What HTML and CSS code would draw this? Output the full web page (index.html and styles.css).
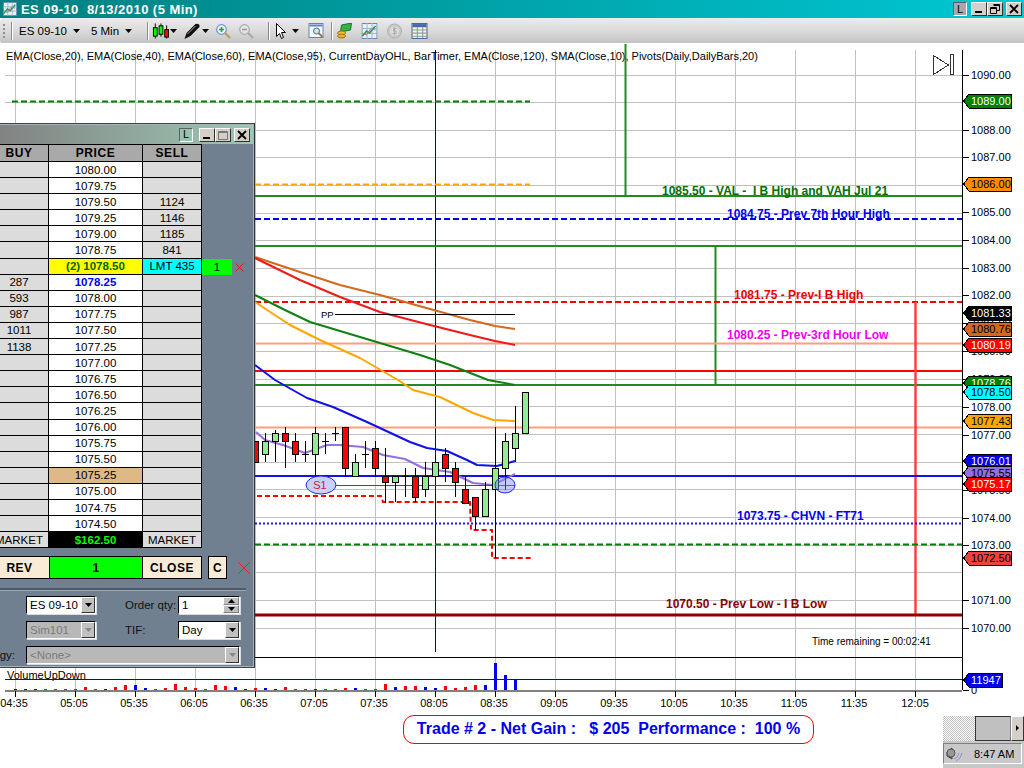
FILE: index.html
```html
<!DOCTYPE html>
<html lang="en">
<head>
    <meta charset="UTF-8">
    <title>ES 09-10 8/13/2010 (5 Min)</title>
    <link rel="stylesheet" href="styles.css">
</head>
<body>
    <svg class="defs" width="0" height="0">
        <symbol id="ico-chart" viewBox="0 0 16 16">
            <rect x="0.5" y="0.5" width="15" height="15" fill="#e8f0fa" stroke="#6688b8"/>
            <path d="M0 5.5H16M0 10.5H16M5.5 0V16M10.5 0V16" stroke="#9ab4d8"/>
            <path d="M1 13L5 8L8 10L14 3" fill="none" stroke="#20a040" stroke-width="1.6"/>
            <path d="M1 10L5 12L9 6L14 7" fill="none" stroke="#d060a0"/>
        </symbol>
        <symbol id="glyph-min" viewBox="0 0 14 12"><path d="M3 9H10" stroke="#000" stroke-width="2"/></symbol>
        <symbol id="glyph-max" viewBox="0 0 14 12"><path d="M2.5 2.5H11.5V10.5H2.5ZM2.5 3.5H11.5" fill="none" stroke="#777"/></symbol>
        <symbol id="glyph-restore" viewBox="0 0 14 12"><path d="M5.5 1.5H11.5V7.5H9M5.5 2.5H11.5M2.5 4.5H8.5V10.5H2.5ZM2.5 5.5H8.5" fill="none" stroke="#000"/></symbol>
        <symbol id="glyph-close" viewBox="0 0 14 12"><path d="M3 2L11 10M11 2L3 10" stroke="#000" stroke-width="1.8"/></symbol>
        <symbol id="glyph-down" viewBox="0 0 7 4"><path d="M0 0H7L3.5 4Z"/></symbol>
    </svg>

    <div class="titlebar">
        <svg class="title-icon"><use href="#ico-chart"/></svg>
        <span class="title-text">ES 09-10  8/13/2010 (5 Min)</span>
        <div class="win-btns">
            <button class="win-l">L</button>
            <button class="win-btn joined"><svg><use href="#glyph-min"/></svg></button>
            <button class="win-btn"><svg><use href="#glyph-restore"/></svg></button>
            <button class="win-btn gap"><svg><use href="#glyph-close"/></svg></button>
        </div>
    </div>

    <div class="toolbar">
        <span class="grip"></span>
        <span class="tool-sep"></span>
        <span class="tool-label first">ES 09-10</span><svg class="caret"><use href="#glyph-down"/></svg>
        <span class="tool-label">5 Min</span><svg class="caret"><use href="#glyph-down"/></svg>
        <span class="tool-sep"></span>
        <svg class="ico" viewBox="0 0 18 16">
            <path d="M3.5 0V16M9.5 0V14M15.5 2V16" stroke="#000"/>
            <rect x="1.5" y="4.5" width="4" height="9" fill="#0f0" stroke="#000"/>
            <rect x="7.5" y="2.5" width="4" height="9" fill="#0f0" stroke="#000"/>
            <rect x="13.5" y="6.5" width="4" height="8" fill="#f00" stroke="#000"/>
        </svg>
        <svg class="caret tight"><use href="#glyph-down"/></svg>
        <svg class="ico" viewBox="0 0 16 16">
            <path d="M0 16L2 10L11 1Q13 0 15 2L15 4L6 13Z" fill="#111"/>
            <path d="M3 11L11 3" stroke="#999"/>
        </svg>
        <svg class="caret tight"><use href="#glyph-down"/></svg>
        <svg class="ico wide" viewBox="0 0 15 15">
            <circle cx="5.5" cy="5.5" r="4.8" fill="#e8f4ff" stroke="#6a9ac8" stroke-width="1.2"/>
            <path d="M3 5.5H8M5.5 3V8" stroke="#20a040" stroke-width="1.6"/>
            <path d="M9 9L14 14" stroke="#c89a60" stroke-width="2.4"/>
        </svg>
        <svg class="ico wide" viewBox="0 0 15 15">
            <circle cx="5.5" cy="5.5" r="4.8" fill="#e4e4e4" stroke="#aaa" stroke-width="1.2"/>
            <path d="M3 5.5H8" stroke="#999" stroke-width="1.6"/>
            <path d="M9 9L14 14" stroke="#aaa" stroke-width="2.4"/>
        </svg>
        <span class="tool-sep"></span>
        <svg class="ico arrow" viewBox="0 0 10 16">
            <path d="M0.5 0.5V13.5L3.5 10.5L5.5 15.5L7.5 14.5L5.5 9.5H9.5Z" fill="#fff" stroke="#000"/>
        </svg>
        <svg class="caret"><use href="#glyph-down"/></svg>
        <svg class="ico" viewBox="0 0 16 16">
            <rect x="0.5" y="0.5" width="14" height="14" fill="#f4f8ff" stroke="#5a86c0"/>
            <path d="M1 2.5H14" stroke="#5a86c0" stroke-width="2"/>
            <circle cx="8" cy="8" r="3" fill="#cfe4f8" stroke="#567"/>
            <path d="M10 10L14 14" stroke="#a87830" stroke-width="2"/>
        </svg>
        <span class="tool-sep"></span>
        <svg class="ico" viewBox="0 0 16 16">
            <path d="M5 2L15 0L14 7L4 9Z" fill="#38b048" stroke="#1a7030"/>
            <ellipse cx="5" cy="10" rx="4" ry="2" fill="#f0c040" stroke="#a07010"/>
            <ellipse cx="5" cy="13" rx="4" ry="2" fill="#e8b030" stroke="#a07010"/>
        </svg>
        <svg class="ico" viewBox="0 0 16 16"><use href="#ico-chart"/></svg>
        <svg class="ico" viewBox="0 0 16 16">
            <circle cx="8" cy="8" r="7" fill="#c8c8c8" stroke="#b0b0b0"/>
            <circle cx="8" cy="8" r="4.5" fill="#dcdcdc"/>
            <path d="M10 5.5H7V8H9.5V10.5H6M8 4V12" fill="none" stroke="#aaa"/>
        </svg>
        <svg class="ico" viewBox="0 0 15 15">
            <rect x="0.5" y="0.5" width="14" height="14" fill="#fdf6d8" stroke="#456a9a"/>
            <path d="M1 2.5H14" stroke="#3f6cb0" stroke-width="3"/>
            <path d="M1 6.5H14M1 9.5H14M1 12.5H14M5.5 4V14M10.5 4V14" stroke="#8a9ab0"/>
        </svg>
    </div>

    <div class="chart">
        <svg class="plot" viewBox="0 44 1024 670" width="1024" height="670">
            <!-- grid -->
            <path class="grid" d="M15.5 50V690M75.5 50V690M135.5 50V690M195.5 50V690M255.5 50V690M315.5 50V690M375.5 50V690M495.5 50V690M555.5 50V690M615.5 50V690M675.5 50V690M735.5 50V690M795.5 50V690M855.5 50V690M915.5 50V690"/>
            <path class="grid" d="M5 75.5H962M5 102.5H962M5 130.5H962M5 157.5H962M5 185.5H962M5 213.5H962M5 240.5H962M5 268.5H962M5 296.5H962M5 323.5H962M5 351.5H962M5 379.5H962M5 406.5H962M5 434.5H962M5 462.5H962M5 489.5H962M5 517.5H962M5 545.5H962M5 572.5H962M5 600.5H962M5 628.5H962"/>
            <path class="now" d="M435.5 50V652"/>

            <text class="legend" x="6" y="60">EMA(Close,20), EMA(Close,40), EMA(Close,60), EMA(Close,95), CurrentDayOHL, BarTimer, EMA(Close,120), SMA(Close,10), Pivots(Daily,DailyBars,20)</text>

            <!-- key levels -->
            <path class="dash-green" d="M12 101.5H530"/>
            <path class="dash-orange" d="M255 184.5H530"/>
            <path class="solid-green" d="M625.5 44V196M255 196H962M255 246H962M715.5 246V385M255 385H962"/>
            <path class="dash-blue" d="M255 219H962"/>
            <path class="dash-red" d="M255 302H962"/>
            <path class="soft-orange" d="M255 343.5H962M255 427.5H962"/>
            <path class="solid-red" d="M255 371H962"/>
            <path class="soft-red" d="M915.5 302V615"/>
            <path class="solid-blue" d="M255 476H962"/>
            <path class="dot-blue" d="M255 523.5H962"/>
            <path class="dash-green" d="M255 544.5H962"/>
            <path class="dark-red" d="M255 615H962"/>

            <text class="lvl t-green" x="662" y="195">1085.50 - VAL -  I B High and VAH Jul 21</text>
            <text class="lvl t-blue" x="727" y="218">1084.75 - Prev 7th Hour High</text>
            <text class="lvl t-red" x="734" y="299">1081.75 - Prev-I B High</text>
            <text class="lvl t-magenta" x="727" y="339">1080.25 - Prev-3rd Hour Low</text>
            <text class="lvl t-blue" x="737" y="520">1073.75 - CHVN - FT71</text>
            <text class="lvl t-darkred" x="666" y="608">1070.50 - Prev Low - I B Low</text>
            <text class="small" x="812" y="645">Time remaining = 00:02:41</text>

            <!-- moving averages -->
            <polyline class="ma ma-brown" points="255,257 300,272 340,285 380,295 430,309 470,320 495,326 515,329"/>
            <polyline class="ma ma-red" points="255,258 300,280 340,297 380,312 430,325 470,335 495,341 515,345"/>
            <polyline class="ma ma-green" points="255,295 285,310 310,322 360,337 420,355 450,365 488,380 515,385"/>
            <polyline class="ma ma-orange" points="255,302 290,325 320,340 360,358 398,380 413,390 440,397 473,413 493,420 515,421"/>
            <polyline class="ma ma-blue" points="255,365 275,380 307,398 333,407 367,422 410,442 427,448 447,451 467,460 477,465 497,466 515,461"/>
            <polyline class="ma ma-purple" points="256,432 265,440 283,445 305,453 327,445 340,445 363,447 383,455 405,459 423,468 450,472 473,483 493,485 515,474"/>

            <!-- pivots -->
            <path class="pp" d="M335 314.5H515"/>
            <text class="tiny" x="321" y="318">PP</text>
            <path class="pivot-line" d="M336 485.5H515"/>
            <polyline class="stop" points="257,496 381,496 383,502 470,502 471,530 492,530 492,558 531,558"/>
            <ellipse class="pivot" cx="321" cy="485" rx="15" ry="9"/>
            <text class="pivot-text" x="320" y="489" text-anchor="middle">S1</text>

            <!-- candles -->
            <path class="wick" d="M265.5 433V462M275.5 430V462M285.5 427V468M295.5 433V462M305.5 441V462M315.5 427V477M325.5 433V454M335.5 427V441M345.5 427V477M355.5 454V477M365.5 441V468M375.5 441V477M385.5 448V503M395.5 476V502M405.5 468V497M415.5 468V502M425.5 462V497M435.5 455V477M445.5 448V482M455.5 462V497M465.5 476V503M475.5 497V530M485.5 482V517M495.5 427V558M505.5 433V490M515.5 406V462"/>
            <path class="wick" d="M302 454.5H309M322 441.5H329M332 433.5H339M362 454.5H369M402 476.5H409"/>
            <g class="candle up">
                <rect x="262.5" y="441.5" width="6" height="13"/>
                <rect x="272.5" y="433.5" width="6" height="8"/>
                <rect x="312.5" y="433.5" width="6" height="21"/>
                <rect x="352.5" y="462.5" width="6" height="14"/>
                <rect x="392.5" y="476.5" width="6" height="6"/>
                <rect x="422.5" y="476.5" width="6" height="13"/>
                <rect x="432.5" y="462.5" width="6" height="14"/>
                <rect x="482.5" y="489.5" width="6" height="27"/>
                <rect x="492.5" y="468.5" width="6" height="21"/>
                <rect x="502.5" y="441.5" width="6" height="27"/>
                <rect x="512.5" y="433.5" width="6" height="15"/>
                <rect x="522.5" y="392.5" width="6" height="41"/>
            </g>
            <g class="candle down">
                <rect x="252.5" y="441.5" width="6" height="21"/>
                <rect x="282.5" y="433.5" width="6" height="8"/>
                <rect x="292.5" y="441.5" width="6" height="13"/>
                <rect x="342.5" y="427.5" width="6" height="41"/>
                <rect x="372.5" y="448.5" width="6" height="20"/>
                <rect x="382.5" y="476.5" width="6" height="6"/>
                <rect x="412.5" y="476.5" width="6" height="21"/>
                <rect x="442.5" y="454.5" width="6" height="14"/>
                <rect x="452.5" y="468.5" width="6" height="14"/>
                <rect x="462.5" y="489.5" width="6" height="14"/>
                <rect x="472.5" y="497.5" width="6" height="19"/>
            </g>
            <ellipse class="pivot over" cx="505" cy="485" rx="10" ry="8"/>

            <!-- price scale -->
            <path class="axis" d="M962.5 50V690"/>
            <path class="axis" d="M963 75.5H969M963 130.5H969M963 157.5H969M963 212.5H969M963 240.5H969M963 268.5H969M963 295.5H969M963 323.5H969M963 351.5H969M963 379.5H969M963 407.5H969M963 435.5H969M963 490.5H969M963 518.5H969M963 545.5H969M963 600.5H969M963 628.5H969M963 690.5H969"/>
            <g class="ticks">
                <text x="971" y="79">1090.00</text>
                <text x="971" y="134">1088.00</text>
                <text x="971" y="161">1087.00</text>
                <text x="971" y="216">1085.00</text>
                <text x="971" y="244">1084.00</text>
                <text x="971" y="272">1083.00</text>
                <text x="971" y="299">1082.00</text>
                <text x="971" y="327">1081.00</text>
                <text x="971" y="355">1080.00</text>
                <text x="971" y="383">1079.00</text>
                <text x="971" y="411">1078.00</text>
                <text x="971" y="439">1077.00</text>
                <text x="971" y="494">1075.00</text>
                <text x="971" y="522">1074.00</text>
                <text x="971" y="549">1073.00</text>
                <text x="971" y="604">1071.00</text>
                <text x="971" y="632">1070.00</text>
                <text x="971" y="694">0</text>
            </g>

            <g class="tag tag-green" transform="translate(0 101)"><path d="M963.5 0L969 -7H1011.5V7H969Z"/><text x="971" y="4">1089.00</text></g>
            <g class="tag tag-dorange" transform="translate(0 184)"><path d="M963.5 0L969 -7H1011.5V7H969Z"/><text x="971" y="4">1086.00</text></g>
            <g class="tag tag-black" transform="translate(0 313)"><path d="M963.5 0L969 -7H1011.5V7H969Z"/><text x="971" y="4">1081.33</text></g>
            <g class="tag tag-brown" transform="translate(0 329)"><path d="M963.5 0L969 -7H1011.5V7H969Z"/><text x="971" y="4">1080.76</text></g>
            <g class="tag tag-red" transform="translate(0 345)"><path d="M963.5 0L969 -7H1011.5V7H969Z"/><text x="971" y="4">1080.19</text></g>
            <g class="tag tag-green" transform="translate(0 383)"><path d="M963.5 0L969 -7H1011.5V7H969Z"/><text x="971" y="4">1078.76</text></g>
            <g class="tag tag-cyan" transform="translate(0 392)"><path d="M963.5 0L969 -7H1011.5V7H969Z"/><text x="971" y="4">1078.50</text></g>
            <g class="tag tag-orange" transform="translate(0 421)"><path d="M963.5 0L969 -7H1011.5V7H969Z"/><text x="971" y="4">1077.43</text></g>
            <g class="tag tag-blue" transform="translate(0 461)"><path d="M963.5 0L969 -7H1011.5V7H969Z"/><text x="971" y="4">1076.01</text></g>
            <g class="tag tag-purple" transform="translate(0 473)"><path d="M963.5 0L969 -7H1011.5V7H969Z"/><text x="971" y="4">1075.55</text></g>
            <g class="tag tag-red" transform="translate(0 484)"><path d="M963.5 0L969 -7H1011.5V7H969Z"/><text x="971" y="4">1075.17</text></g>
            <g class="tag tag-flat" transform="translate(0 558)"><path d="M963.5 0L969 -7H1011.5V7H969Z"/><text x="971" y="4">1072.50</text></g>

            <!-- volume panel -->
            <path class="axis" d="M255 657.5H962"/>
            <text class="legend" x="7" y="679">VolumeUpDown</text>
            <path class="vol-line" d="M5 679.5H962"/>
            <path class="vol red" d="M45.5 690v-1M55.5 690v-1M65.5 690v-1M75.5 690v-1M85.5 690v-3M95.5 690v-1M115.5 690v-3M125.5 690v-5M155.5 690v-1M165.5 690v-2M175.5 690v-6M185.5 690v-3M195.5 690v-2M205.5 690v-1M215.5 690v-5M225.5 690v-4M255.5 690v-2M285.5 690v-3M295.5 690v-1M305.5 690v-1M325.5 690v-1M335.5 690v-1M345.5 690v-2M365.5 690v-1M375.5 690v-1M385.5 690v-6M405.5 690v-4M415.5 690v-4M445.5 690v-4M455.5 690v-2M465.5 690v-3M475.5 690v-5"/>
            <path class="vol blue" d="M15.5 690v-1M25.5 690v-1M35.5 690v-1M105.5 690v-1M135.5 690v-5M145.5 690v-2M235.5 690v-3M245.5 690v-1M265.5 690v-2M275.5 690v-1M315.5 690v-1M355.5 690v-2M395.5 690v-3M425.5 690v-3M435.5 690v-2M485.5 690v-5M495.5 690v-27M505.5 690v-15M515.5 690v-10"/>
            <g class="tag tag-blue" transform="translate(0 680)"><path d="M963.5 0L969 -7H1002.5V7H969Z"/><text x="971" y="4">11947</text></g>

            <!-- time scale -->
            <path class="base" d="M5 690.5H962"/>
            <path class="axis" d="M15.5 691V697M75.5 691V697M135.5 691V697M195.5 691V697M255.5 691V697M315.5 691V697M375.5 691V697M435.5 691V697M495.5 691V697M555.5 691V697M615.5 691V697M675.5 691V697M735.5 691V697M795.5 691V697M855.5 691V697M915.5 691V697"/>
            <g class="times">
                <text x="14" y="707">04:35</text>
                <text x="74" y="707">05:05</text>
                <text x="134" y="707">05:35</text>
                <text x="194" y="707">06:05</text>
                <text x="254" y="707">06:35</text>
                <text x="314" y="707">07:05</text>
                <text x="374" y="707">07:35</text>
                <text x="434" y="707">08:05</text>
                <text x="494" y="707">08:35</text>
                <text x="554" y="707">09:05</text>
                <text x="614" y="707">09:35</text>
                <text x="674" y="707">10:05</text>
                <text x="734" y="707">10:35</text>
                <text x="794" y="707">11:05</text>
                <text x="854" y="707">11:35</text>
                <text x="915" y="707">12:05</text>
            </g>

            <path class="play" d="M933.5 55.5V74.5L948.5 65ZM950.5 54.5H953.5V74.5H950.5Z"/>
        </svg>

        <div class="order-window">
            <div class="order-title">
                <button class="win-l">L</button>
                <button class="win-btn joined"><svg><use href="#glyph-min"/></svg></button>
                <button class="win-btn"><svg><use href="#glyph-max"/></svg></button>
                <button class="win-btn gap"><svg><use href="#glyph-close"/></svg></button>
            </div>

            <div class="ladder-row">
                <div class="ladder">
                    <div class="cell head">BUY</div><div class="cell head">PRICE</div><div class="cell head">SELL</div>
                    <div class="cell side"></div><div class="cell price">1080.00</div><div class="cell side"></div>
                    <div class="cell side"></div><div class="cell price">1079.75</div><div class="cell side"></div>
                    <div class="cell side"></div><div class="cell price">1079.50</div><div class="cell side">1124</div>
                    <div class="cell side"></div><div class="cell price">1079.25</div><div class="cell side">1146</div>
                    <div class="cell side"></div><div class="cell price">1079.00</div><div class="cell side">1185</div>
                    <div class="cell side"></div><div class="cell price">1078.75</div><div class="cell side">841</div>
                    <div class="cell side"></div><div class="cell price entry">(2) 1078.50</div><div class="cell side limit">LMT 435</div>
                    <div class="cell side">287</div><div class="cell price last">1078.25</div><div class="cell side"></div>
                    <div class="cell side">593</div><div class="cell price">1078.00</div><div class="cell side"></div>
                    <div class="cell side">987</div><div class="cell price">1077.75</div><div class="cell side"></div>
                    <div class="cell side">1011</div><div class="cell price">1077.50</div><div class="cell side"></div>
                    <div class="cell side">1138</div><div class="cell price">1077.25</div><div class="cell side"></div>
                    <div class="cell side"></div><div class="cell price">1077.00</div><div class="cell side"></div>
                    <div class="cell side"></div><div class="cell price">1076.75</div><div class="cell side"></div>
                    <div class="cell side"></div><div class="cell price">1076.50</div><div class="cell side"></div>
                    <div class="cell side"></div><div class="cell price">1076.25</div><div class="cell side"></div>
                    <div class="cell side"></div><div class="cell price">1076.00</div><div class="cell side"></div>
                    <div class="cell side"></div><div class="cell price">1075.75</div><div class="cell side"></div>
                    <div class="cell side"></div><div class="cell price">1075.50</div><div class="cell side"></div>
                    <div class="cell side"></div><div class="cell price open">1075.25</div><div class="cell side"></div>
                    <div class="cell side"></div><div class="cell price">1075.00</div><div class="cell side"></div>
                    <div class="cell side"></div><div class="cell price">1074.75</div><div class="cell side"></div>
                    <div class="cell side"></div><div class="cell price">1074.50</div><div class="cell side"></div>
                    <div class="cell side">MARKET</div><div class="cell pnl">$162.50</div><div class="cell side">MARKET</div>
                </div>
                <div class="position">
                    <div class="position-qty">1</div>
                    <svg class="cancel-x" viewBox="0 0 9 9"><path d="M0.5 0.5L8.5 8.5M8.5 0.5L0.5 8.5"/></svg>
                </div>
            </div>

            <div class="actions">
                <button class="act act-rev">REV</button>
                <button class="act act-qty">1</button>
                <button class="act act-close">CLOSE</button>
                <button class="act act-c">C</button>
                <svg class="flat-x" viewBox="0 0 12 12"><path d="M0.5 0.5L11.5 11.5M11.5 0.5L0.5 11.5"/></svg>
            </div>

            <div class="divider"></div>

            <div class="order-form">
                <span></span>
                <div class="combo"><span>ES 09-10</span><i class="drop"><svg><use href="#glyph-down"/></svg></i></div>
                <label>Order qty:</label>
                <div class="combo"><span>1</span><i class="spin"><b><svg><use href="#glyph-down"/></svg></b><b><svg><use href="#glyph-down"/></svg></b></i></div>

                <span></span>
                <div class="combo off"><span>Sim101</span><i class="drop"><svg><use href="#glyph-down"/></svg></i></div>
                <label>TIF:</label>
                <div class="combo"><span>Day</span><i class="drop"><svg><use href="#glyph-down"/></svg></i></div>

                <label class="clip-label">Strategy:</label>
                <div class="combo off full"><span>&lt;None&gt;</span><i class="drop"><svg><use href="#glyph-down"/></svg></i></div>
            </div>
        </div>
    </div>

    <div class="footer">
        <div class="banner">Trade # 2 - Net Gain :   $ 205  Performance :  100 %</div>
        <div class="desktop-corner">
            <div class="task-scroll">
                <span class="scroll-track"></span>
                <span class="scroll-thumb"></span>
                <span class="scroll-btn"></span>
            </div>
            <div class="tray">
                <svg class="tray-icon" viewBox="0 0 18 16">
                    <path d="M1 6L6 2V13L1 10Z" fill="#777" stroke="#444"/>
                    <circle cx="5" cy="7" r="4" fill="#999" stroke="#555"/>
                    <path d="M8 13Q12 12 13 7M10 15Q15 13 16 7" fill="none" stroke="#8f8fe0"/>
                </svg>
                <span>8:47 AM</span>
            </div>
        </div>
    </div>
</body>
</html>
```

FILE: styles.css
```css
* {
    margin: 0;
    padding: 0;
    box-sizing: border-box;
}

body {
    width: 1024px;
    height: 768px;
    overflow: hidden;
    background: #fff;
    font-family: "Liberation Sans", Arial, sans-serif;
    font-size: 11px;
    color: #000;
}

.defs {
    position: absolute;
}

button {
    font-family: inherit;
    border: none;
}

/* title bar */
.titlebar {
    display: flex;
    align-items: center;
    height: 18px;
    padding-left: 3px;
    background: linear-gradient(90deg, #008080, #00c8d4);
}

.title-icon {
    width: 14px;
    height: 14px;
}

.title-text {
    margin-left: 4px;
    color: #fff;
    font-size: 13px;
    font-weight: bold;
    letter-spacing: 0.45px;
    white-space: pre;
}

.win-btns {
    display: flex;
    align-items: center;
    margin-left: auto;
    padding-right: 2px;
}

.win-l {
    width: 14px;
    height: 14px;
    margin-right: 4px;
    background: #a8a8a8;
    border: 1px solid #606060;
    border-right-color: #fff;
    border-bottom-color: #fff;
    font-size: 11px;
    line-height: 11px;
}

.win-btn {
    display: block;
    width: 16px;
    height: 14px;
    margin-right: 0;
    background: #d4d0c8;
    border: 1px solid #808080;
    border-top-color: #fff;
    border-left-color: #fff;
    border-right-color: #333;
    border-bottom-color: #333;
    overflow: hidden;
}

.win-btn svg {
    display: block;
    width: 14px;
    height: 12px;
}

.win-btn.gap {
    margin-left: 3px;
}

/* toolbar */
.toolbar {
    display: flex;
    align-items: center;
    height: 26px;
    padding-left: 3px;
    background: linear-gradient(180deg, #ececec, #d8d8d8 55%, #c4c4c4 96%, #fff 96%);
    border-radius: 4px 0 0 4px;
}

.grip {
    width: 2px;
    height: 14px;
    background: repeating-linear-gradient(180deg, #909090 0 2px, transparent 2px 4px);
}

.tool-sep {
    width: 1px;
    height: 18px;
    margin: 0 4px 0 6px;
    background: #8a8a8a;
    box-shadow: 1px 0 0 #fff;
}

.tool-label {
    margin-left: 2px;
    font-size: 11.5px;
}

.tool-label.first {
    margin-left: 3px;
}

.caret {
    width: 7px;
    height: 4px;
    margin: 0 9px 0 6px;
}

.caret.tight {
    margin: 0 7px 0 1px;
}

.tool-sep + .ico {
    margin-left: 0;
}

.ico {
    width: 17px;
    height: 16px;
    flex: none;
}

.ico.wide {
    width: 15px;
    height: 15px;
    margin: 0 8px 0 0;
}

.ico.arrow {
    width: 10px;
    margin-left: 3px;
}

.ico + .ico {
    margin-left: 8px;
}

.ico.wide + .ico.wide {
    margin-left: 0;
}

/* chart */
.chart {
    position: relative;
    height: 670px;
    overflow: hidden;
}

.plot {
    display: block;
    font-family: "Liberation Sans", Arial, sans-serif;
}

.plot path,
.plot polyline {
    fill: none;
}

.grid {
    stroke: #c0c0c0;
    shape-rendering: crispEdges;
}

.now {
    stroke: #0000a0;
    shape-rendering: crispEdges;
}

.legend {
    font-size: 11px;
}

.dash-green {
    stroke: #008000;
    stroke-width: 2;
    stroke-dasharray: 6 3;
}

.dash-orange {
    stroke: #ffa500;
    stroke-width: 2;
    stroke-dasharray: 6 3;
}

.solid-green {
    stroke: #228b22;
    stroke-width: 2;
}

.dash-blue {
    stroke: #0000e0;
    stroke-width: 2;
    stroke-dasharray: 6 3;
}

.dash-red {
    stroke: #f00;
    stroke-width: 2;
    stroke-dasharray: 6 3;
}

.soft-orange {
    stroke: #ffa07a;
    stroke-width: 2;
}

.solid-red {
    stroke: #f00;
    stroke-width: 2;
}

.soft-red {
    stroke: #ff4040;
    stroke-width: 2.5;
}

.solid-blue {
    stroke: #1010f0;
    stroke-width: 2;
}

.dot-blue {
    stroke: #1a1ae0;
    stroke-width: 2;
    stroke-dasharray: 2 2;
}

.dark-red {
    stroke: #8b0000;
    stroke-width: 3;
}

.lvl {
    font-size: 12px;
    font-weight: bold;
    white-space: pre;
}

.t-green {
    fill: #007000;
}

.t-blue {
    fill: #0000f0;
}

.t-red {
    fill: #f00000;
}

.t-magenta {
    fill: #f000f0;
}

.t-darkred {
    fill: #8b0000;
}

.small {
    font-size: 10px;
}

.tiny {
    font-size: 9.5px;
}

.ma {
    stroke-width: 2;
    stroke-linejoin: round;
}

.ma-brown {
    stroke: #d2691e;
}

.ma-red {
    stroke: #f01818;
}

.ma-green {
    stroke: #108010;
}

.ma-orange {
    stroke: #ffa500;
}

.ma-blue {
    stroke: #1010e8;
}

.ma-purple {
    stroke: #9370db;
}

.pp {
    stroke: #000;
    shape-rendering: crispEdges;
}

.pivot-line {
    stroke: #f00;
    shape-rendering: crispEdges;
}

.stop {
    stroke: #f00;
    stroke-width: 2;
    stroke-dasharray: 5 3;
}

.pivot {
    fill: #c8d2f8;
    stroke: #2828e0;
}

.pivot.over {
    fill: rgba(120, 140, 240, 0.45);
}

.pivot-text {
    font-size: 11px;
    fill: #d01040;
}

.wick {
    stroke: #000;
    shape-rendering: crispEdges;
}

.candle rect {
    stroke: #000;
    shape-rendering: crispEdges;
}

.candle.up rect {
    fill: #90ee90;
}

.candle.down rect {
    fill: #f00;
}

.axis {
    stroke: #000;
    shape-rendering: crispEdges;
}

.ticks text {
    font-size: 11px;
}

.tag path {
    stroke: #000;
    shape-rendering: crispEdges;
}

.tag text {
    font-size: 11px;
    fill: #fff;
}

.plot .tag-green path { fill: #008000; }
.plot .tag-dorange path { fill: #ff8c00; }
.plot .tag-black path { fill: #000; }
.plot .tag-brown path { fill: #d2691e; }
.plot .tag-red path { fill: #f00; }
.plot .tag-cyan path { fill: #0ff; }
.plot .tag-orange path { fill: #ffa500; }
.plot .tag-blue path { fill: #0000f0; }
.plot .tag-purple path { fill: #9370db; }
.plot .tag-flat path { fill: #f04040; }

.tag-dorange text,
.tag-brown text,
.tag-cyan text,
.tag-orange text,
.tag-purple text,
.tag-flat text {
    fill: #000;
}

.vol-line {
    stroke: #0000e0;
    shape-rendering: crispEdges;
}

.vol {
    stroke-width: 3;
    shape-rendering: crispEdges;
}

.vol.red {
    stroke: #f00;
}

.vol.blue {
    stroke: #0000f0;
}

.base {
    stroke: #808080;
    stroke-width: 2;
    shape-rendering: crispEdges;
}

.times text {
    font-size: 11px;
    text-anchor: middle;
}

.play {
    stroke: #333;
    shape-rendering: crispEdges;
}

/* order window, floats over the chart */
.order-window {
    position: absolute;
    left: -12px;
    top: 79px;
    width: 267px;
    height: 545px;
    background: #708090;
    border: 2px solid #3c444c;
    border-right-color: #2c3238;
    outline: 1px solid #a8b0b8;
    outline-offset: -2px;
}

.order-title {
    display: flex;
    align-items: center;
    justify-content: flex-end;
    height: 19px;
    padding-right: 3px;
    background: linear-gradient(90deg, #808080, #9cc8b4);
}

.order-title .win-l {
    margin-right: 6px;
    background: #9cc0b0;
}

.ladder-row {
    display: flex;
}

.ladder {
    display: grid;
    grid-template-columns: 59px 94px 59px;
    grid-template-rows: 17px repeat(24, 16.1px);
    border-top: 1px solid #000;
    flex: none;
}

.cell {
    display: flex;
    align-items: center;
    justify-content: center;
    border-right: 1px solid #000;
    border-bottom: 1px solid #000;
    font-size: 11.5px;
    white-space: nowrap;
    overflow: hidden;
}

.head {
    background: #a9a9a9;
    font-size: 12px;
    font-weight: bold;
    letter-spacing: 0.6px;
}

.side {
    background: #dcdcdc;
}

.price {
    background: #fff;
}

.entry {
    background: #ff0;
    color: #006400;
    font-weight: bold;
}

.limit {
    background: #0ff;
}

.last {
    color: #0000f0;
    font-weight: bold;
}

.open {
    background: #deb887;
}

.pnl {
    background: #000;
    color: #0f0;
    font-weight: bold;
}

.position {
    display: flex;
    align-items: center;
    align-self: flex-start;
    margin-top: 115px;
    height: 16px;
}

.position-qty {
    display: flex;
    align-items: center;
    justify-content: center;
    width: 30px;
    height: 16px;
    background: #0f0;
    font-size: 11.5px;
}

.cancel-x {
    width: 9px;
    height: 9px;
    margin-left: 3px;
    stroke: #d02020;
}

.actions {
    display: flex;
    align-items: center;
    height: 23px;
    margin-top: 8px;
}

.act {
    height: 23px;
    border: 1px solid #000;
    background: #faebd7;
    font-size: 12px;
    font-weight: bold;
    letter-spacing: 0.5px;
}

.act-rev {
    width: 60px;
    border-left: none;
}

.act-qty {
    width: 94px;
    margin-left: -1px;
    background: #0f0;
}

.act-close {
    width: 60px;
    margin-left: -1px;
}

.act-c {
    width: 19px;
    margin-left: 6px;
}

.flat-x {
    width: 12px;
    height: 12px;
    margin-left: 11px;
    stroke: #f02020;
}

.divider {
    width: 256px;
    height: 2px;
    margin-top: 9px;
    background: #4e5a66;
    box-shadow: 0 1px 0 #9aa6b2;
}

.order-form {
    display: grid;
    grid-template-columns: 36px 70px 82px 62px;
    grid-auto-rows: 18px;
    row-gap: 7px;
    align-items: center;
    margin-top: 6px;
    font-size: 11.5px;
}

.order-form label {
    padding-left: 29px;
    color: #111;
    white-space: nowrap;
}

.order-form .clip-label {
    display: flex;
    justify-content: flex-end;
    padding: 0 11px 0 0;
}

.combo {
    display: flex;
    align-items: center;
    justify-content: space-between;
    height: 18px;
    padding-left: 3px;
    background: #fff;
    border: 1px solid #000;
    border-right-color: #fff;
    border-bottom-color: #fff;
    box-shadow: 1px 1px 0 #d8dde2;
    font-size: 11.5px;
}

.combo.off {
    background: #b8b8b8;
    color: #7a7a7a;
}

.combo.full {
    grid-column: span 3;
}

.drop {
    display: flex;
    align-items: center;
    justify-content: center;
    width: 14px;
    height: 16px;
    background: #c0c0c0;
    border: 1px solid #808080;
    border-top-color: #fff;
    border-left-color: #fff;
    border-right-color: #333;
    border-bottom-color: #333;
}

.drop svg,
.spin svg {
    display: block;
    width: 7px;
    height: 4px;
}

.off .drop svg {
    fill: #888;
}

.spin {
    display: flex;
    flex-direction: column;
    width: 16px;
}

.spin b {
    display: flex;
    align-items: center;
    justify-content: center;
    height: 8px;
    background: #c0c0c0;
    border: 1px solid #808080;
    border-top-color: #fff;
    border-left-color: #fff;
}

.spin b:first-child svg {
    transform: rotate(180deg);
}

/* bottom strip */
.footer {
    display: flex;
    align-items: flex-start;
    height: 54px;
    padding-left: 403px;
}

.banner {
    width: 411px;
    height: 29px;
    margin-top: 1px;
    background: #fff;
    border: 1px solid #f00;
    border-radius: 11px;
    color: #0000f0;
    font-size: 16px;
    font-weight: bold;
    line-height: 26px;
    text-align: center;
    white-space: pre;
}

.desktop-corner {
    width: 81px;
    height: 52px;
    margin: 2px 0 0 auto;
    background: #c8c8c8;
}

.task-scroll {
    display: flex;
    height: 25px;
}

.scroll-track {
    width: 32px;
    background: repeating-conic-gradient(#c0c0c0 0 25%, #fff 0 50%) 0 0 / 2px 2px;
}

.scroll-thumb {
    width: 36px;
    background: #c0c0c0;
    border: 1px solid #808080;
    border-top-color: #333;
    border-left-color: #333;
    border-bottom-color: #333;
}

.scroll-btn {
    position: relative;
    width: 13px;
    background: #d4d0c8;
    border: 1px solid #333;
    border-top-color: #fff;
    border-left-color: #fff;
}

.scroll-btn::after {
    content: "";
    position: absolute;
    left: 4px;
    top: 8px;
    border-left: 3px solid #000;
    border-top: 3px solid transparent;
    border-bottom: 3px solid transparent;
}

.tray {
    display: flex;
    align-items: center;
    height: 21px;
    margin: 2px 2px 0 0;
    padding-left: 2px;
    border: 1px solid #808080;
    border-right-color: #fff;
    border-bottom-color: #fff;
    font-size: 11px;
}

.tray-icon {
    width: 18px;
    height: 16px;
    margin-right: 10px;
}
```
